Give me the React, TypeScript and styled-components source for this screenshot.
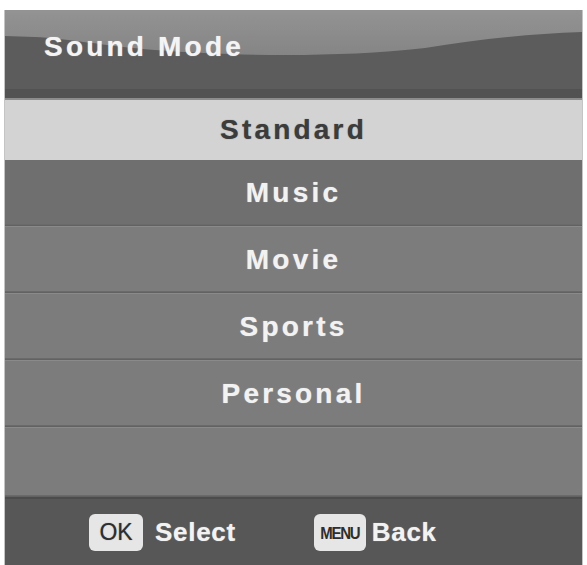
import React from 'react';
import styled, { createGlobalStyle } from 'styled-components';

const GlobalStyle = createGlobalStyle`
    html, body {
        margin: 0;
        padding: 0;
        background: #ffffff;
        overflow: hidden;
    }
`;

const Panel = styled.div`
    margin: 10px 4px 0 4px;
    width: 579px;
    height: 555px;
    display: flex;
    flex-direction: column;
    background: #7b7b7b;
    border-left: 1px solid #c4c4c4;
    border-right: 1px solid #c4c4c4;
    box-sizing: border-box;
    font-family: "Liberation Sans", Arial, sans-serif;
    overflow: hidden;
`;

const Header = styled.div`
    position: relative;
    height: 88px;
    flex-shrink: 0;
    background: #5c5c5c;
    border-bottom: 2px solid #8c8c8c;
    box-sizing: content-box;
`;

const Gloss = styled.svg`
    position: absolute;
    left: 0;
    top: 0;
    width: 100%;
    height: 100%;
`;

const Title = styled.div`
    position: relative;
    padding: 23px 0 0 39px;
    font-size: 28px;
    line-height: 1;
    font-weight: 700;
    letter-spacing: 3.2px;
    color: #f4f4f4;
    text-shadow: 0 0 1px rgba(255, 255, 255, 0.6);
`;

const Row = styled.div<{ $selected?: boolean; $dark?: boolean; $h: number }>`
    height: ${p => p.$h}px;
    flex-shrink: 0;
    display: flex;
    align-items: center;
    justify-content: center;
    font-size: 28px;
    font-weight: 700;
    letter-spacing: 3.2px;
    color: ${p => (p.$selected ? '#3c3c3c' : '#f2f2f2')};
    text-shadow: ${p => (p.$selected ? '0 0 1px rgba(40, 40, 40, 0.6)' : '0 0 1px rgba(255, 255, 255, 0.6)')};
    background: ${p => (p.$selected ? '#d3d3d3' : p.$dark ? '#6f6f6f' : '#7c7c7c')};
    border-bottom: ${p => (p.$selected ? 'none' : '1px solid #626262')};
    box-shadow: ${p => (p.$selected ? 'none' : 'inset 0 -1px 0 #6a6a6a')};
`;

const Divider = styled.div`
    height: 1px;
    flex-shrink: 0;
    background: #8a8a8a;
`;

const Footer = styled.div`
    flex: 1;
    display: flex;
    align-items: center;
    padding-left: 84px;
    gap: 78px;
    background: #575757;
    border-top: 2px solid #4c4c4c;
`;

const Hint = styled.div<{ $gap: number }>`
    display: flex;
    align-items: center;
    gap: ${p => p.$gap}px;
`;

const Key = styled.div<{ $w: number }>`
    width: ${p => p.$w}px;
    height: 37px;
    border-radius: 6px;
    background: #e6e6e6;
    display: flex;
    align-items: center;
    justify-content: center;
    color: #2e2e2e;
`;

const OkLabel = styled.span`
    font-size: 23px;
    font-weight: 400;
    text-shadow: 0 0 1px rgba(40, 40, 40, 0.5);
`;

const MenuLabel = styled.span`
    font-size: 15px;
    font-weight: 700;
    letter-spacing: -1.2px;
    transform: scaleY(1.1);
`;

const HintText = styled.span`
    font-size: 26px;
    font-weight: 700;
    letter-spacing: 0.7px;
    color: #f2f2f2;
    text-shadow: 0 0 1px rgba(255, 255, 255, 0.6);
`;

const modes = ['Standard', 'Music', 'Movie', 'Sports', 'Personal'];

export default function App() {
    return (
        <>
            <GlobalStyle />
            <Panel>
                <Header>
                    <Gloss viewBox="0 0 577 88" preserveAspectRatio="none">
                        <defs>
                            <linearGradient id="gl" x1="0" y1="0" x2="0" y2="1">
                                <stop offset="0" stopColor="#939393" />
                                <stop offset="1" stopColor="#858585" />
                            </linearGradient>
                        </defs>
                        <path
                            d="M0 0 H577 V22 C520 24 470 30 420 38 C330 48 230 46 150 40 C100 36 60 28 30 27 L0 26 Z"
                            fill="url(#gl)"
                        />
                        <rect x="0" y="79" width="577" height="9" fill="#525252" />
                    </Gloss>
                    <Title>Sound Mode</Title>
                </Header>
                {modes.map((m, i) => (
                    <React.Fragment key={m}>
                        <Row $selected={i === 0} $dark={i === 1} $h={i === 0 ? 60 : 65}>
                            {m}
                        </Row>
                        {i > 0 && <Divider />}
                    </React.Fragment>
                ))}
                <Row $h={68} />
                <Footer>
                    <Hint $gap={12}>
                        <Key $w={54}>
                            <OkLabel>OK</OkLabel>
                        </Key>
                        <HintText>Select</HintText>
                    </Hint>
                    <Hint $gap={6}>
                        <Key $w={52}>
                            <MenuLabel>MENU</MenuLabel>
                        </Key>
                        <HintText>Back</HintText>
                    </Hint>
                </Footer>
            </Panel>
        </>
    );
}
